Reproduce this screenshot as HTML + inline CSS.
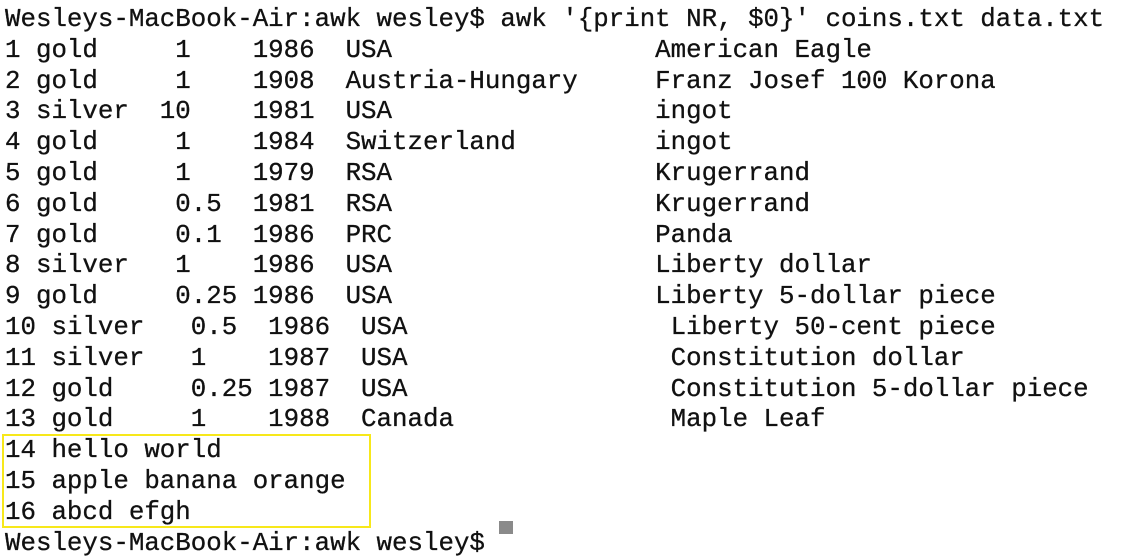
<!DOCTYPE html>
<html><head><style>
html,body{margin:0;padding:0;background:#fff;width:1128px;height:534px;overflow:hidden}
#t{position:absolute;left:5px;top:5px;font-family:"Liberation Mono",monospace;font-size:25.8px;line-height:30.8px;color:#111}
.l{position:relative;height:30.8px}
.l span{position:absolute;top:0;white-space:pre;-webkit-text-stroke:0.3px #111}
#box{position:absolute;left:2px;top:434px;width:365px;height:90px;border:2px solid #f7e81a}
#cur{position:absolute;left:499px;top:521px;width:14px;height:13px;background:#8a8a8a}
</style></head><body>
<div id="t"><div class="l"><span style="left:0">Wesleys-MacBook-Air:awk wesley$ awk '{print NR, $0}' coins.txt data.txt</span></div><div class="l"><span style="left:0">1 gold</span><span style="left:11ch">1</span><span style="left:16ch">1986</span><span style="left:22ch">USA</span><span style="left:42ch">American Eagle</span></div><div class="l"><span style="left:0">2 gold</span><span style="left:11ch">1</span><span style="left:16ch">1908</span><span style="left:22ch">Austria-Hungary</span><span style="left:42ch">Franz Josef 100 Korona</span></div><div class="l"><span style="left:0">3 silver</span><span style="left:10ch">10</span><span style="left:16ch">1981</span><span style="left:22ch">USA</span><span style="left:42ch">ingot</span></div><div class="l"><span style="left:0">4 gold</span><span style="left:11ch">1</span><span style="left:16ch">1984</span><span style="left:22ch">Switzerland</span><span style="left:42ch">ingot</span></div><div class="l"><span style="left:0">5 gold</span><span style="left:11ch">1</span><span style="left:16ch">1979</span><span style="left:22ch">RSA</span><span style="left:42ch">Krugerrand</span></div><div class="l"><span style="left:0">6 gold</span><span style="left:11ch">0.5</span><span style="left:16ch">1981</span><span style="left:22ch">RSA</span><span style="left:42ch">Krugerrand</span></div><div class="l"><span style="left:0">7 gold</span><span style="left:11ch">0.1</span><span style="left:16ch">1986</span><span style="left:22ch">PRC</span><span style="left:42ch">Panda</span></div><div class="l"><span style="left:0">8 silver</span><span style="left:11ch">1</span><span style="left:16ch">1986</span><span style="left:22ch">USA</span><span style="left:42ch">Liberty dollar</span></div><div class="l"><span style="left:0">9 gold</span><span style="left:11ch">0.25</span><span style="left:16ch">1986</span><span style="left:22ch">USA</span><span style="left:42ch">Liberty 5-dollar piece</span></div><div class="l"><span style="left:0">10 silver</span><span style="left:12ch">0.5</span><span style="left:17ch">1986</span><span style="left:23ch">USA</span><span style="left:43ch">Liberty 50-cent piece</span></div><div class="l"><span style="left:0">11 silver</span><span style="left:12ch">1</span><span style="left:17ch">1987</span><span style="left:23ch">USA</span><span style="left:43ch">Constitution dollar</span></div><div class="l"><span style="left:0">12 gold</span><span style="left:12ch">0.25</span><span style="left:17ch">1987</span><span style="left:23ch">USA</span><span style="left:43ch">Constitution 5-dollar piece</span></div><div class="l"><span style="left:0">13 gold</span><span style="left:12ch">1</span><span style="left:17ch">1988</span><span style="left:23ch">Canada</span><span style="left:43ch">Maple Leaf</span></div><div class="l"><span style="left:0">14 hello world</span></div><div class="l"><span style="left:0">15 apple banana orange</span></div><div class="l"><span style="left:0">16 abcd efgh</span></div><div class="l"><span style="left:0">Wesleys-MacBook-Air:awk wesley$</span></div></div>
<div id="box"></div>
<div id="cur"></div>
</body></html>
